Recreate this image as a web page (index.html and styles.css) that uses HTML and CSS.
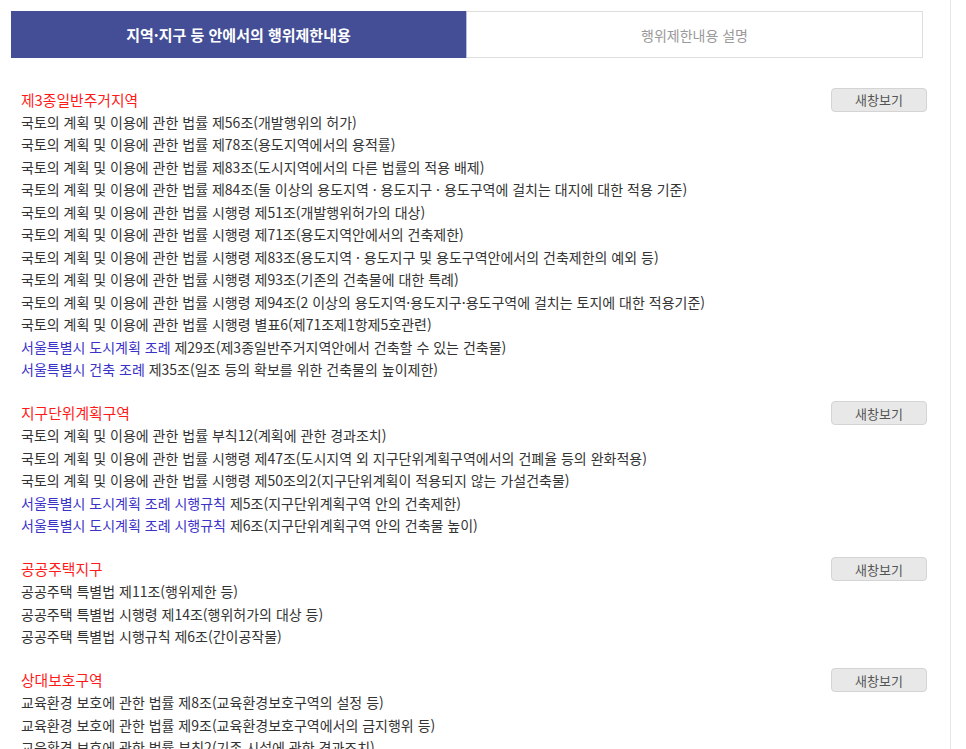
FILE: index.html
```html
<!DOCTYPE html>
<html lang="ko">
<head>
<meta charset="utf-8">
<link rel="stylesheet" href="styles.css">
</head>
<body>
<div class="page">
  <div class="main">
    <div class="tabs">
      <div class="tab active">지역·지구 등 안에서의 행위제한내용</div>
      <div class="tab">행위제한내용 설명</div>
    </div>
    <div class="content">
      <div class="section">
        <div class="head"><span class="title">제3종일반주거지역</span><button class="btn">새창보기</button></div>
        <div class="line">국토의 계획 및 이용에 관한 법률 제56조(개발행위의 허가)</div>
        <div class="line">국토의 계획 및 이용에 관한 법률 제78조(용도지역에서의 용적률)</div>
        <div class="line">국토의 계획 및 이용에 관한 법률 제83조(도시지역에서의 다른 법률의 적용 배제)</div>
        <div class="line">국토의 계획 및 이용에 관한 법률 제84조(둘 이상의 용도지역 · 용도지구 · 용도구역에 걸치는 대지에 대한 적용 기준)</div>
        <div class="line">국토의 계획 및 이용에 관한 법률 시행령 제51조(개발행위허가의 대상)</div>
        <div class="line">국토의 계획 및 이용에 관한 법률 시행령 제71조(용도지역안에서의 건축제한)</div>
        <div class="line">국토의 계획 및 이용에 관한 법률 시행령 제83조(용도지역 · 용도지구 및 용도구역안에서의 건축제한의 예외 등)</div>
        <div class="line">국토의 계획 및 이용에 관한 법률 시행령 제93조(기존의 건축물에 대한 특례)</div>
        <div class="line">국토의 계획 및 이용에 관한 법률 시행령 제94조(2 이상의 용도지역·용도지구·용도구역에 걸치는 토지에 대한 적용기준)</div>
        <div class="line">국토의 계획 및 이용에 관한 법률 시행령 별표6(제71조제1항제5호관련)</div>
        <div class="line"><span class="local">서울특별시 도시계획 조례</span> 제29조(제3종일반주거지역안에서 건축할 수 있는 건축물)</div>
        <div class="line"><span class="local">서울특별시 건축 조례</span> 제35조(일조 등의 확보를 위한 건축물의 높이제한)</div>
      </div>
      <div class="section">
        <div class="head"><span class="title">지구단위계획구역</span><button class="btn">새창보기</button></div>
        <div class="line">국토의 계획 및 이용에 관한 법률 부칙12(계획에 관한 경과조치)</div>
        <div class="line">국토의 계획 및 이용에 관한 법률 시행령 제47조(도시지역 외 지구단위계획구역에서의 건폐율 등의 완화적용)</div>
        <div class="line">국토의 계획 및 이용에 관한 법률 시행령 제50조의2(지구단위계획이 적용되지 않는 가설건축물)</div>
        <div class="line"><span class="local">서울특별시 도시계획 조례 시행규칙</span> 제5조(지구단위계획구역 안의 건축제한)</div>
        <div class="line"><span class="local">서울특별시 도시계획 조례 시행규칙</span> 제6조(지구단위계획구역 안의 건축물 높이)</div>
      </div>
      <div class="section">
        <div class="head"><span class="title">공공주택지구</span><button class="btn">새창보기</button></div>
        <div class="line">공공주택 특별법 제11조(행위제한 등)</div>
        <div class="line">공공주택 특별법 시행령 제14조(행위허가의 대상 등)</div>
        <div class="line">공공주택 특별법 시행규칙 제6조(간이공작물)</div>
      </div>
      <div class="section">
        <div class="head"><span class="title">상대보호구역</span><button class="btn">새창보기</button></div>
        <div class="line">교육환경 보호에 관한 법률 제8조(교육환경보호구역의 설정 등)</div>
        <div class="line">교육환경 보호에 관한 법률 제9조(교육환경보호구역에서의 금지행위 등)</div>
        <div class="line">교육환경 보호에 관한 법률 부칙2(기존 시설에 관한 경과조치)</div>
      </div>
    </div>
  </div>
</div>
</body>
</html>
```

FILE: styles.css
```css
html, body {
  margin: 0;
  padding: 0;
  background: #ffffff;
}
body {
  font-family: "Noto Sans CJK KR", "Noto Sans", sans-serif;
  color: #333333;
  overflow: hidden;
}
.page {
  display: flex;
  height: 749px;
}
.main {
  width: 951px;
  border-right: 1px solid #e6e6e6;
  box-sizing: border-box;
  padding: 11px 24px 0 11px;
  flex: none;
}
.tabs {
  display: flex;
  width: 912px;
  height: 47px;
  box-sizing: border-box;
  border: 1px solid #dddddd;
}
.tab {
  flex: 1;
  display: flex;
  align-items: center;
  justify-content: center;
  font-size: 14px;
  color: #999999;
  background: #ffffff;
}
.tab.active {
  background: #434e96;
  color: #ffffff;
  font-weight: bold;
  font-size: 15px;
  margin: -1px 0 -1px -1px;
  border-right: 1px solid #b9bde0;
}
.content {
  padding: 30px 0 0 10px;
  width: 906px;
}
.section {
  margin-bottom: 21px;
}
.head {
  display: flex;
  align-items: center;
  justify-content: space-between;
  height: 22.5px;
}
.title {
  color: #ff1a1a;
  font-size: 14.8px;
}
.btn {
  width: 96px;
  height: 24px;
  border: 1px solid #d4d4d4;
  border-radius: 4px;
  background: #e8e8e8;
  color: #555555;
  font-family: "Noto Sans CJK KR", "Noto Sans", sans-serif;
  font-size: 13px;
  padding: 0;
  margin-top: 1px;
}
.line {
  font-size: 14px;
  line-height: 22.5px;
  white-space: nowrap;
}
.local {
  color: #3b32c8;
}
```
